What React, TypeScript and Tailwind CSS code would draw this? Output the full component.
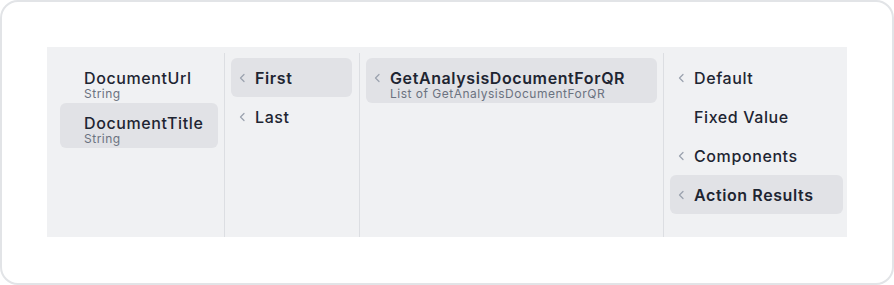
import React from "react";

type Item = { title: string; sub?: string; chevron?: boolean; selected?: boolean; bold?: boolean };

const Chevron = () => (
  <svg width="8" height="10" viewBox="0 0 8 10" fill="none">
    <polyline points="5,1.5 1.5,5 5,8.5" stroke="#9ca3af" strokeWidth="1.3" strokeLinecap="round" strokeLinejoin="round" />
  </svg>
);

function Row({ item, slot }: { item: Item; slot: boolean }) {
  const two = !!item.sub;
  return (
    <div
      className={
        "flex rounded-[6px] pl-2 " +
        (two ? "pt-[11px] pb-[2px] " : "h-[39px] items-center ") +
        (item.selected ? "bg-[#e1e2e6]" : "")
      }
    >
      {slot ? (
        <div className="flex h-[18px] w-[10px] shrink-0 items-center">{item.chevron ? <Chevron /> : null}</div>
      ) : (
        <div className="w-[10px] shrink-0" />
      )}
      <div className="ml-[6px] flex flex-col">
        <div
          className={
            "text-[16px] leading-[18px] tracking-[0.6px] text-[#1e2532] whitespace-nowrap " +
            (item.bold ? "font-semibold" : "font-medium")
          }
        >
          {item.title}
        </div>
        {item.sub ? (
          <div className="text-[12px] leading-[14px] tracking-[0.5px] text-[#6b7280] whitespace-nowrap">{item.sub}</div>
        ) : null}
      </div>
    </div>
  );
}

export default function App() {
  const col1: Item[] = [
    { title: "DocumentUrl", sub: "String" },
    { title: "DocumentTitle", sub: "String", selected: true },
  ];
  const col2: Item[] = [
    { title: "First", chevron: true, selected: true, bold: true },
    { title: "Last", chevron: true },
  ];
  const col3: Item[] = [
    { title: "GetAnalysisDocumentForQR", sub: "List of GetAnalysisDocumentForQR", chevron: true, selected: true, bold: true },
  ];
  const col4: Item[] = [
    { title: "Default", chevron: true },
    { title: "Fixed Value" },
    { title: "Components", chevron: true },
    { title: "Action Results", chevron: true, selected: true, bold: true },
  ];
  return (
    <div
      className="h-[285px] w-[894px] bg-white"
      style={{ fontFamily: "Inter, 'Noto Sans', sans-serif" }}
    >
      <div className="box-border h-[285px] w-[894px] rounded-[18px] border-2 border-[#e2e4e7] bg-white p-[45px]">
        <div className="flex h-[190px] w-[800px] bg-[#f0f1f3] pt-[6px]">
          <div className="flex w-[177px] flex-col pl-[13px] pr-[6px] pt-[5px]">
            {col1.map((it) => (
              <Row key={it.title} item={it} slot={false} />
            ))}
          </div>
          <div className="flex w-[135px] flex-col border-l border-[#dcdee2] pl-[6px] pr-[7px] pt-[5px]">
            {col2.map((it) => (
              <Row key={it.title} item={it} slot={true} />
            ))}
          </div>
          <div className="flex w-[304px] flex-col border-l border-[#dcdee2] pl-[6px] pr-[6px] pt-[5px]">
            {col3.map((it) => (
              <Row key={it.title} item={it} slot={true} />
            ))}
          </div>
          <div className="flex w-[184px] flex-col border-l border-[#dcdee2] pl-[6px] pr-[4px] pt-[5px]">
            {col4.map((it) => (
              <Row key={it.title} item={it} slot={true} />
            ))}
          </div>
        </div>
      </div>
    </div>
  );
}
